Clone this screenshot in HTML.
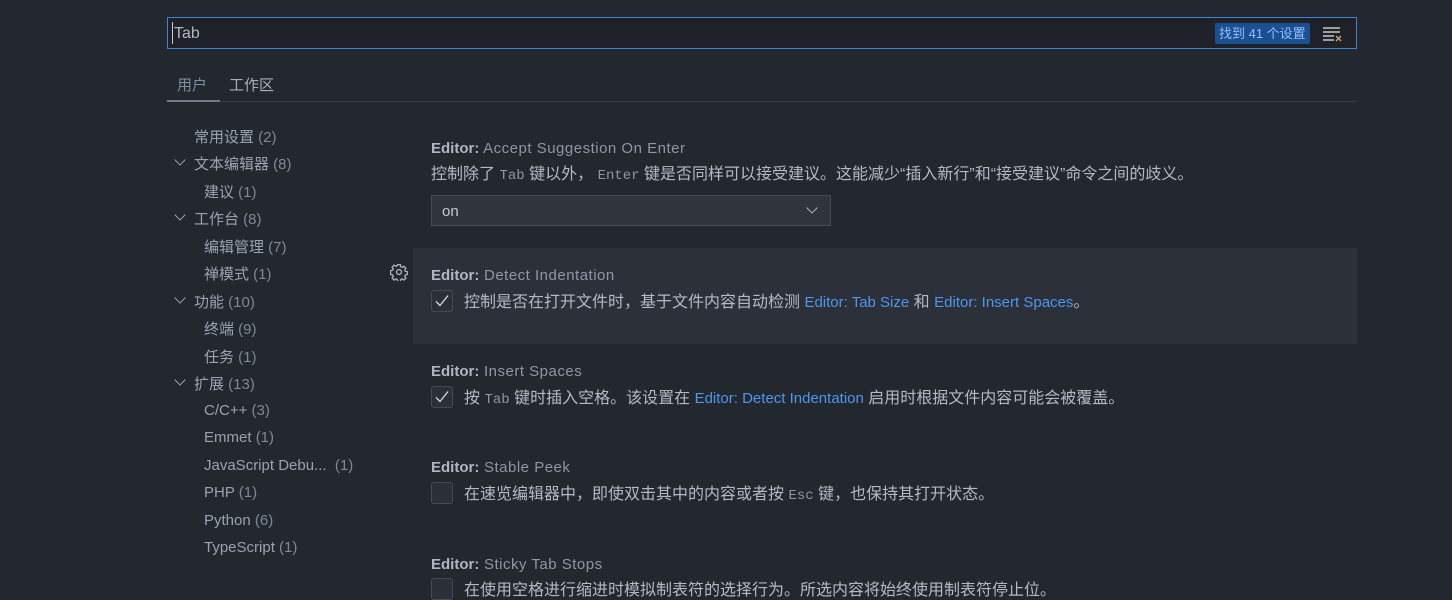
<!DOCTYPE html>
<html><head><meta charset="utf-8"><style>
*{margin:0;padding:0;box-sizing:border-box}
body{width:1452px;height:596px;background:#23272e;overflow:hidden;font-family:"Segoe UI","Liberation Sans","Noto Sans CJK SC",sans-serif;color:#abb2bf;font-size:15px;position:relative}
.abs{position:absolute;white-space:nowrap}
.search{left:167px;top:17px;width:1190px;height:32px;border:1px solid #3e82d8;background:#1e2228}
.badge{left:1215px;top:23px;height:21px;padding:0 4px;background:#1c4f8f;color:#8fc0ff;font-size:13px;line-height:21px;border-radius:2px}
.tabline{left:167px;top:101px;width:1190px;height:1px;background:#3a3f48}
.tabact{left:167px;top:100px;width:53px;height:2px;background:#6b7a8f}
.nav{color:#9aa3b2;font-size:15px}
.nav .c{color:#7f8896}
.chev{width:8px;height:8px;border-right:1.5px solid #9aa3b2;border-bottom:1.5px solid #9aa3b2;transform:rotate(45deg)}
.t{font-size:15px;color:#8e97a6;letter-spacing:0.5px}
.t b{color:#aeb6c3;font-weight:bold;letter-spacing:0}
.d{font-size:16px;color:#b3bac6}
.d code{font-family:"Liberation Mono",monospace;font-size:14px;color:#8e97a6}
.d a{color:#4d97ee;font-size:15px}
.cb{width:22px;height:22px;border:1px solid #454b56;background:#2b3038;border-radius:3px}
.cb svg{position:absolute;left:2px;top:2px}
</style></head><body>
<div class="abs search"></div>
<div class="abs" style="left:172px;top:22px;width:1px;height:22px;background:#ccc"></div>
<div class="abs" style="left:174px;top:25px;font-size:16px;color:#b0b7c3">Tab</div>
<div class="abs badge">找到 41 个设置</div>
<svg class="abs" style="left:1322px;top:26px" width="20" height="16"><g stroke="#c8c8c8" stroke-width="1.5"><line x1="1" y1="2" x2="18" y2="2"/><line x1="1" y1="6" x2="18" y2="6"/><line x1="1" y1="10" x2="12" y2="10"/><line x1="1" y1="14" x2="12" y2="14"/></g><g stroke="#d7a46a" stroke-width="1.3"><line x1="14" y1="10" x2="19" y2="15"/><line x1="19" y1="10" x2="14" y2="15"/></g></svg>
<div class="abs" style="left:177px;top:74px;font-size:15px;color:#7d8ea4">用户</div>
<div class="abs" style="left:229px;top:74px;font-size:15px;color:#a9b0bb">工作区</div>
<div class="abs tabline"></div><div class="abs tabact"></div>

<div class="abs nav" style="left:194px;top:126px">常用设置 <span class="c">(2)</span></div>
<div class="abs chev" style="left:176px;top:156px"></div>
<div class="abs nav" style="left:194px;top:153px">文本编辑器 <span class="c">(8)</span></div>
<div class="abs nav" style="left:204px;top:181px">建议 <span class="c">(1)</span></div>
<div class="abs chev" style="left:176px;top:211px"></div>
<div class="abs nav" style="left:194px;top:208px">工作台 <span class="c">(8)</span></div>
<div class="abs nav" style="left:204px;top:236px">编辑管理 <span class="c">(7)</span></div>
<div class="abs nav" style="left:204px;top:263px">禅模式 <span class="c">(1)</span></div>
<div class="abs chev" style="left:176px;top:294px"></div>
<div class="abs nav" style="left:194px;top:291px">功能 <span class="c">(10)</span></div>
<div class="abs nav" style="left:204px;top:318px">终端 <span class="c">(9)</span></div>
<div class="abs nav" style="left:204px;top:346px">任务 <span class="c">(1)</span></div>
<div class="abs chev" style="left:176px;top:376px"></div>
<div class="abs nav" style="left:194px;top:373px">扩展 <span class="c">(13)</span></div>
<div class="abs nav" style="left:204px;top:402px">C/C++ <span class="c">(3)</span></div>
<div class="abs nav" style="left:204px;top:429px">Emmet <span class="c">(1)</span></div>
<div class="abs nav" style="left:204px;top:457px">JavaScript Debu... &nbsp;<span class="c">(1)</span></div>
<div class="abs nav" style="left:204px;top:484px">PHP <span class="c">(1)</span></div>
<div class="abs nav" style="left:204px;top:512px">Python <span class="c">(6)</span></div>
<div class="abs nav" style="left:204px;top:539px">TypeScript <span class="c">(1)</span></div>

<div class="abs t" style="left:431px;top:140px"><b>Editor:</b> Accept Suggestion On Enter</div>
<div class="abs d" style="left:431px;top:160px">控制除了 <code>Tab</code> 键以外， <code>Enter</code> 键是否同样可以接受建议。这能减少“插入新行”和“接受建议”命令之间的歧义。</div>
<div class="abs" style="left:431px;top:195px;width:400px;height:31px;background:#2f343d;border:1px solid #454b56"></div>
<div class="abs" style="left:442px;top:203px;color:#c5cad3">on</div>
<div class="abs chev" style="left:808px;top:204px;border-color:#b0b6c0"></div>

<div class="abs" style="left:413px;top:248px;width:944px;height:96px;background:#2c3038"></div>
<svg class="abs" style="left:390px;top:263px" width="18" height="18" viewBox="0 0 16 16"><path fill="none" stroke="#aab3c2" stroke-width="1.2" d="M6.8 1.5h2.4l.4 1.8 1.2.6 1.6-1 1.7 1.7-1 1.6.5 1.2 1.9.4v2.4l-1.9.4-.5 1.2 1 1.6-1.7 1.7-1.6-1-1.2.5-.4 1.9H6.8l-.4-1.9-1.2-.5-1.6 1-1.7-1.7 1-1.6-.5-1.2-1.9-.4V6.8l1.9-.4.5-1.2-1-1.6 1.7-1.7 1.6 1 1.2-.6z"/><circle cx="8" cy="8" r="2.2" fill="none" stroke="#aab3c2" stroke-width="1.2"/></svg>
<div class="abs t" style="left:431px;top:267px"><b>Editor:</b> Detect Indentation</div>
<div class="abs cb" style="left:431px;top:290px"><svg width="16" height="16"><path d="M2 8.5l4 4 8-10" fill="none" stroke="#d0d4da" stroke-width="1.4"/></svg></div>
<div class="abs d" style="left:464px;top:288px">控制是否在打开文件时，基于文件内容自动检测 <a>Editor: Tab Size</a> 和 <a>Editor: Insert Spaces</a>。</div>

<div class="abs t" style="left:431px;top:363px"><b>Editor:</b> Insert Spaces</div>
<div class="abs cb" style="left:431px;top:386px"><svg width="16" height="16"><path d="M2 8.5l4 4 8-10" fill="none" stroke="#d0d4da" stroke-width="1.4"/></svg></div>
<div class="abs d" style="left:464px;top:384px">按 <code>Tab</code> 键时插入空格。该设置在 <a>Editor: Detect Indentation</a> 启用时根据文件内容可能会被覆盖。</div>

<div class="abs t" style="left:431px;top:459px"><b>Editor:</b> Stable Peek</div>
<div class="abs cb" style="left:431px;top:482px"></div>
<div class="abs d" style="left:464px;top:480px">在速览编辑器中，即使双击其中的内容或者按 <code>Esc</code> 键，也保持其打开状态。</div>

<div class="abs t" style="left:431px;top:556px"><b>Editor:</b> Sticky Tab Stops</div>
<div class="abs cb" style="left:431px;top:578px"></div>
<div class="abs d" style="left:464px;top:576px">在使用空格进行缩进时模拟制表符的选择行为。所选内容将始终使用制表符停止位。</div>
</body></html>
